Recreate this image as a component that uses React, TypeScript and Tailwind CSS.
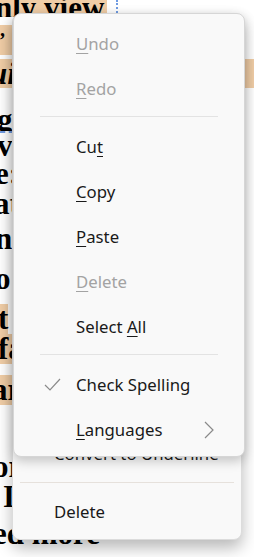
import React from "react";

type Item = { label: string; key?: number; disabled?: boolean; checked?: boolean; sub?: boolean };

const front: (Item | "sep")[] = [
  { label: "Undo", key: 0, disabled: true },
  { label: "Redo", key: 0, disabled: true },
  "sep",
  { label: "Cut", key: 2 },
  { label: "Copy", key: 0 },
  { label: "Paste", key: 0 },
  { label: "Delete", key: 0, disabled: true },
  { label: "Select All", key: 7 },
  "sep",
  { label: "Check Spelling", checked: true },
  { label: "Languages", key: 0, sub: true },
];

// document lines peeking out on the left edge
const lower: { text: string; hl?: boolean; top: string; off: string }[] = [
  { text: "v", top: "-mt-[3px]", off: "-ml-[3px]" },
  { text: "e:", top: "-mt-[2px]", off: "-ml-[5px]" },
  { text: "at", top: "mt-[0px]", off: "-ml-[6px]" },
  { text: "n", top: "mt-[5px]", off: "-ml-[5px]" },
  { text: "o", top: "mt-[10px]", off: "-ml-[5px]" },
  { text: "t", hl: true, top: "mt-[10px]", off: "-ml-[2px]" },
  { text: "fa", hl: true, top: "mt-[0px]", off: "-ml-[2px]" },
  { text: "ar", hl: true, top: "mt-[11px]", off: "-ml-[8px]" },
  { text: "or", top: "mt-[47px]", off: "-ml-[7px]" },
  { text: "I", top: "mt-[0px]", off: "ml-[3px]" },
  { text: "ed more", top: "mt-[7px]", off: "-ml-[7px]" },
];

function Label({ item }: { item: Item }) {
  return (
    <span>
      {item.label.split("").map((c, i) =>
        i === item.key ? (
          <span key={i} className="underline underline-offset-[3px] decoration-1">
            {c}
          </span>
        ) : (
          <span key={i}>{c}</span>
        )
      )}
    </span>
  );
}

export default function App() {
  return (
    <div
      className="relative w-[254px] h-[557px] overflow-hidden bg-white"
      style={{ fontFamily: '"Liberation Serif", serif' }}
    >
      {/* document */}
      <div className="flex flex-col text-[31px] font-bold text-black leading-[30px]">
        <div className="h-[17px] overflow-hidden flex items-end">
          <span className="bg-[#f0cda6] whitespace-nowrap -ml-[5px] pr-[3px] h-[30px] -mb-[6px]">nly view</span>
        </div>
        <div className="h-[8px]" />
        <div className="h-[30px] overflow-hidden w-[12px] bg-[#f0cda6] text-[20px] leading-[30px]">
          <span className="-ml-[1px]">’</span>
        </div>
        <div className="h-[4px]" />
        <div className="h-[29px] overflow-hidden bg-[#f0cda6] whitespace-nowrap">
          <span className="italic inline-block -ml-[10px]">ui</span>
        </div>
        <div className="h-[43px] overflow-hidden whitespace-nowrap flex items-end">
          <span className="inline-block -ml-[3px] -mb-[4px]">g</span>
        </div>
        <div className="h-[3px] border-t-2 border-dashed border-[#6f9be2] w-[14px]" />
        {lower.map((l, i) => (
          <div key={i} className={`${l.top} h-[30px] whitespace-nowrap`}>
            <span className={`${l.hl ? "bg-[#f0cda6]" : ""} inline-block ${l.off}`}>{l.text}</span>
          </div>
        ))}
      </div>
      <div className="absolute left-[116px] top-0 h-[17px] border-l-2 border-dotted border-[#6f9be2]" />

      {/* back menu */}
      <div
        className="absolute left-[12px] top-[14px] w-[230px] h-[526px] rounded-[8px] bg-[#f9f9f9] border border-[#dcdcdc] shadow-[0_8px_16px_rgba(0,0,0,0.28)] flex flex-col justify-end pb-[5px] text-[16.75px] text-[#1a1a1a]"
        style={{ fontFamily: '"Segoe UI", "Noto Sans", sans-serif' }}
      >
        <div className="h-[45px] flex items-center pl-[41px]">Convert to Underline</div>
        <div className="h-[13px] flex items-center px-[7px]">
          <div className="h-px w-full bg-[#e6e1dc]" />
        </div>
        <div className="h-[45px] flex items-center pl-[41px]">Delete</div>
      </div>

      {/* front menu */}
      <div
        className="absolute left-[13px] top-[13px] w-[232px] rounded-[8px] bg-[#f9f9f9] border border-[#d6d6d6] shadow-[0_4px_12px_rgba(0,0,0,0.22)] pt-[7px] pb-[4px] text-[16.75px]"
        style={{ fontFamily: '"Segoe UI", "Noto Sans", sans-serif' }}
      >
        {front.map((it, i) =>
          it === "sep" ? (
            <div key={i} className="h-[13px] pt-[5px] px-[26px]">
              <div className="h-px w-full bg-[#e3e3e3]" />
            </div>
          ) : (
            <div
              key={i}
              className={`h-[45px] flex items-center relative pl-[62px] ${it.disabled ? "text-[#a3a3a3]" : "text-[#1a1a1a]"}`}
            >
              {it.checked && (
                <svg className="absolute left-[30px] top-[16px]" width="17" height="13" viewBox="0 0 17 13">
                  <path d="M1 7 L6 12 L16 1" fill="none" stroke="#8a8a8a" strokeWidth="1.2" />
                </svg>
              )}
              <Label item={it} />
              {it.sub && (
                <svg className="absolute left-[190px] top-[14px]" width="10" height="18" viewBox="0 0 10 18">
                  <path d="M1 1 L9 9 L1 17" fill="none" stroke="#8a8a8a" strokeWidth="1.2" />
                </svg>
              )}
            </div>
          )
        )}
      </div>
    </div>
  );
}
